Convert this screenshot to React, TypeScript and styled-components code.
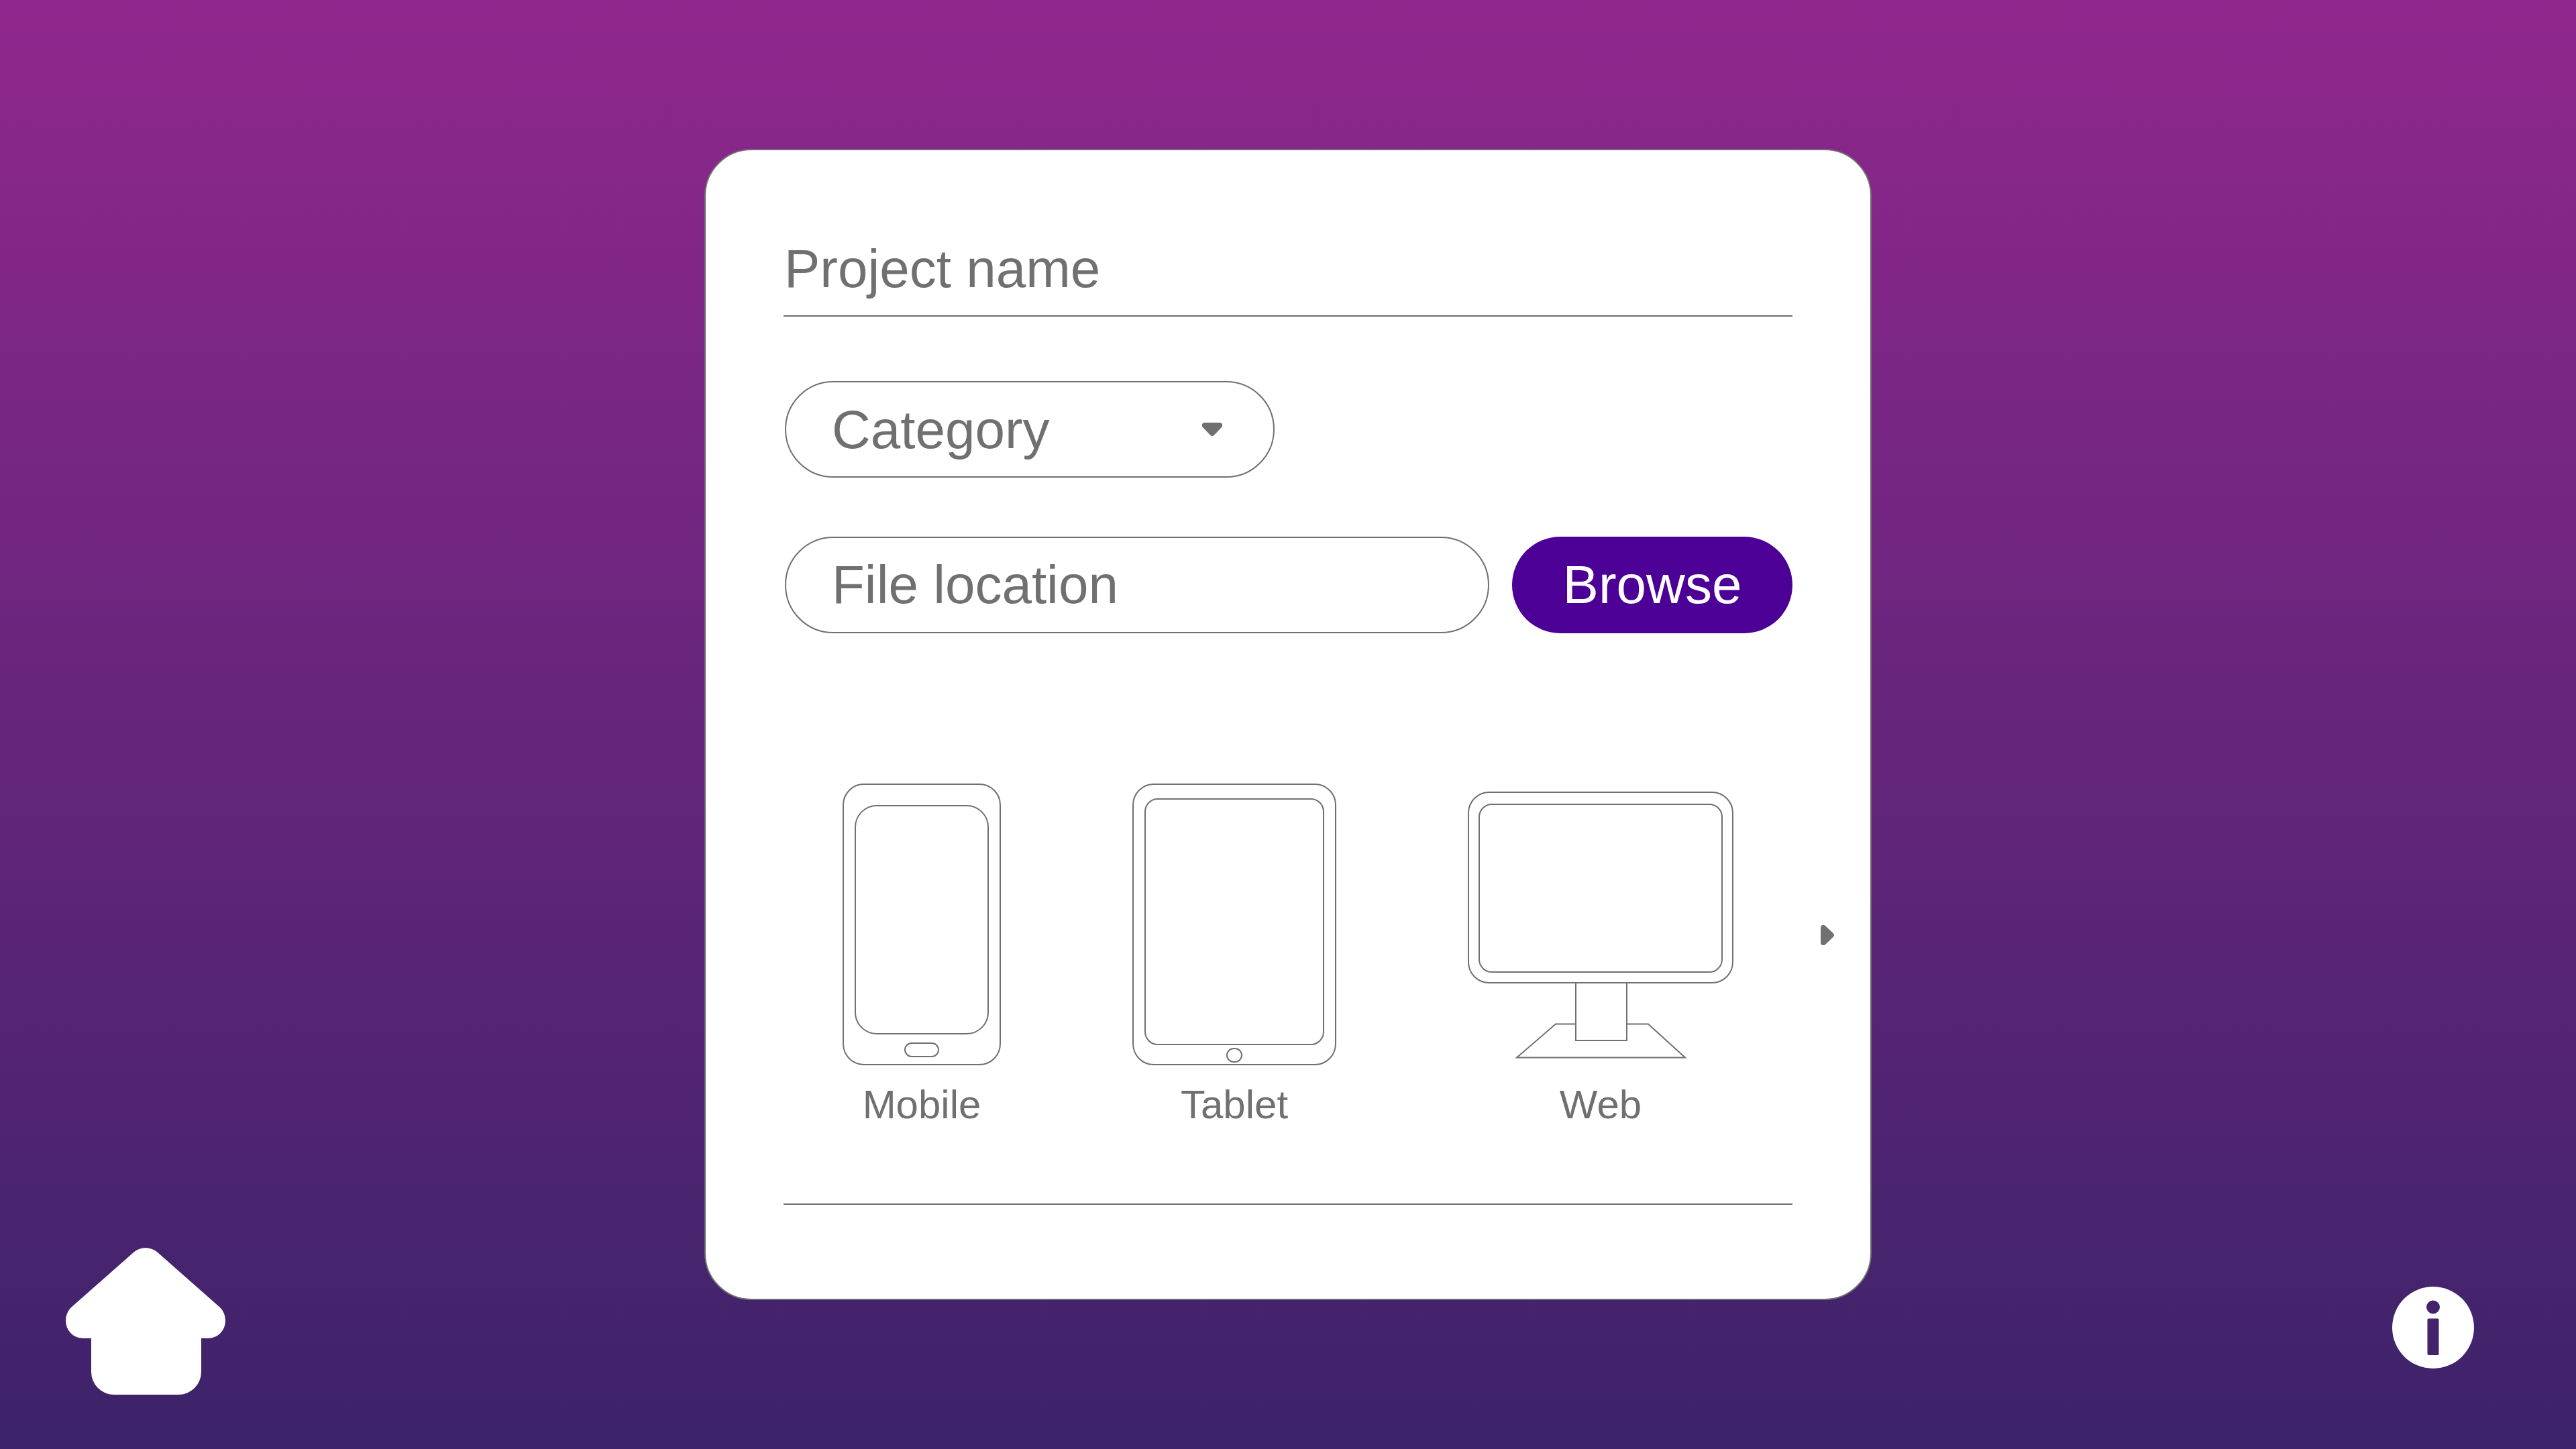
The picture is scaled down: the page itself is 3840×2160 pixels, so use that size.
import React from "react";
import styled, { createGlobalStyle } from "styled-components";

const ink = "#707070";

const GlobalStyle = createGlobalStyle`
  *, *::before, *::after { box-sizing: border-box; }
  body {
    margin: 0;
    font-family: "Liberation Sans", Arial, Helvetica, sans-serif;
    color: ${ink};
  }
`;

const Page = styled.div`
  min-height: 100vh;
  display: grid;
  grid-template-columns: 1fr minmax(0, 1740px) 1fr;
  background: linear-gradient(#90278e, #3c2369);
`;

const Side = styled.nav<{ $end?: boolean }>`
  display: flex;
  align-items: flex-end;
  justify-content: ${(p) => (p.$end ? "flex-end" : "flex-start")};
  padding: ${(p) => (p.$end ? "0 152px 120px" : "0 98px 81px")};
`;

const SideLink = styled.a`
  display: block;
  color: #fff;
  svg { display: block; }
`;

const InfoButton = styled.button`
  display: block;
  padding: 0;
  border: 0;
  background: none;
  color: #fff;
  cursor: pointer;
  svg { display: block; }
`;

const Card = styled.form`
  align-self: center;
  display: flex;
  flex-direction: column;
  padding: 112px 116px 140px;
  background: #fff;
  border: 2px solid ${ink};
  border-radius: 70px;
`;

const NameInput = styled.input`
  width: 100%;
  height: 136px;
  padding: 0 1px 4px;
  border: 0;
  border-bottom: 2px solid ${ink};
  background: none;
  font: inherit;
  font-size: 80px;
  color: ${ink};
  &::placeholder { color: ${ink}; opacity: 1; }
`;

const SelectWrap = styled.div`
  display: flex;
  align-items: center;
  width: 730px;
  margin-top: 96px;
  margin-left: 2px;
  svg { flex: none; margin-left: -108px; pointer-events: none; }
`;

const Select = styled.select`
  appearance: none;
  flex: 0 0 100%;
  height: 144px;
  padding: 0 120px 0 68px;
  border: 2px solid ${ink};
  border-radius: 72px;
  background: none;
  font: inherit;
  font-size: 80px;
  color: ${ink};
`;

const FileRow = styled.div`
  display: flex;
  gap: 34px;
  margin-top: 88px;
  margin-left: 2px;
`;

const FileInput = styled.input`
  flex: 1;
  min-width: 0;
  height: 144px;
  padding: 0 68px;
  border: 2px solid ${ink};
  border-radius: 72px;
  background: none;
  font: inherit;
  font-size: 80px;
  color: ${ink};
  &::placeholder { color: ${ink}; opacity: 1; }
`;

const BrowseButton = styled.button`
  width: 418px;
  height: 144px;
  padding: 0;
  border: 0;
  border-radius: 72px;
  background: #4d0096;
  font: inherit;
  font-size: 80px;
  color: #fff;
  cursor: pointer;
`;

const Carousel = styled.div`
  display: flex;
  align-items: center;
  justify-content: space-between;
  margin: 224px -62px 112px 88px;
`;

const Devices = styled.div`
  display: flex;
  gap: 196px;
`;

const Device = styled.button`
  display: flex;
  flex-direction: column;
  align-items: center;
  gap: 24px;
  padding: 0;
  border: 0;
  background: none;
  font: inherit;
  font-size: 60px;
  line-height: 70px;
  color: ${ink};
  cursor: pointer;
  svg { display: block; }
`;

const NextButton = styled.button`
  display: block;
  padding: 0 0 62px;
  border: 0;
  background: none;
  color: ${ink};
  cursor: pointer;
  svg { display: block; }
`;

const Divider = styled.hr`
  width: 100%;
  margin: 0;
  border: 0;
  border-top: 2px solid ${ink};
`;

const outline = { fill: "#fff", stroke: ink, strokeWidth: 2 };

const MobileDrawing = () => (
  <svg width="236" height="420" viewBox="0 0 236 420" aria-hidden="true" {...outline}>
    <rect x="1" y="1" width="234" height="418" rx="31" />
    <rect x="19" y="33" width="198" height="340" rx="32" />
    <rect x="93" y="387" width="50" height="20" rx="10" />
  </svg>
);

const TabletDrawing = () => (
  <svg width="304" height="420" viewBox="0 0 304 420" aria-hidden="true" {...outline}>
    <rect x="1" y="1" width="302" height="418" rx="31" />
    <rect x="19" y="23" width="266" height="366" rx="19" />
    <rect x="141" y="395" width="22" height="20" rx="10" />
  </svg>
);

const WebDrawing = () => (
  <svg width="396" height="420" viewBox="0 0 396 420" aria-hidden="true" {...outline}>
    <path d="M131 358.500H269L324 408.500H73Z" />
    <rect x="161" y="290" width="76" height="93" />
    <rect x="1" y="13" width="394" height="284" rx="31" />
    <rect x="17" y="31" width="362" height="250" rx="19" />
  </svg>
);

export default function App() {
  return (
    <>
      <GlobalStyle />
      <Page>
        <Side>
          <SideLink href="#home" aria-label="Home">
            <svg width="238" height="219" viewBox="0 0 238 219" fill="currentColor">
              <path d="M101 7C111 -2 127 -2 137 7L230 89C235 94 238 101 238 109A26 26 0 0 1 212 135H202V185A34 34 0 0 1 168 219H72A34 34 0 0 1 38 185V135H26A26 26 0 0 1 0 109C0 101 3 94 8 89Z" />
            </svg>
          </SideLink>
        </Side>
        <Card onSubmit={(e) => e.preventDefault()}>
          <NameInput aria-label="Project name" placeholder="Project name" />
          <SelectWrap>
            <Select aria-label="Category" defaultValue="">
              <option value="">Category</option>
            </Select>
            <svg width="30" height="20" viewBox="0 0 30 20" fill={ink} aria-hidden="true">
              <path d="M4 0H26C30 0 31.500 4 29 7L18 18.500Q15 21.500 12 18.500L1 7C-1.500 4 0 0 4 0Z" />
            </svg>
          </SelectWrap>
          <FileRow>
            <FileInput aria-label="File location" placeholder="File location" />
            <BrowseButton type="button">Browse</BrowseButton>
          </FileRow>
          <Carousel>
            <Devices>
              <Device type="button">
                <MobileDrawing />
                Mobile
              </Device>
              <Device type="button">
                <TabletDrawing />
                Tablet
              </Device>
              <Device type="button">
                <WebDrawing />
                Web
              </Device>
            </Devices>
            <NextButton type="button" aria-label="More devices">
              <svg width="20" height="30" viewBox="0 0 20 30" fill="currentColor">
                <path d="M0 4C0 0 4 -1.500 7 1L18.500 12Q21.500 15 18.500 18L7 29C4 31.500 0 30 0 26Z" />
              </svg>
            </NextButton>
          </Carousel>
          <Divider />
        </Card>
        <Side $end>
          <InfoButton type="button" aria-label="Information">
            <svg width="122" height="122" viewBox="0 0 122 122" fill="currentColor" fillRule="evenodd">
              <path d="M61 0A61 61 0 0 1 61 122A61 61 0 0 1 61 0ZM61 20.500A10 10 0 0 0 61 40.500A10 10 0 0 0 61 20.500ZM54 47.500Q52.500 47.500 52.500 49V100Q52.500 102 54 102H68Q69.500 102 69.500 100V49Q69.500 47.500 68 47.500Z" />
            </svg>
          </InfoButton>
        </Side>
      </Page>
    </>
  );
}
